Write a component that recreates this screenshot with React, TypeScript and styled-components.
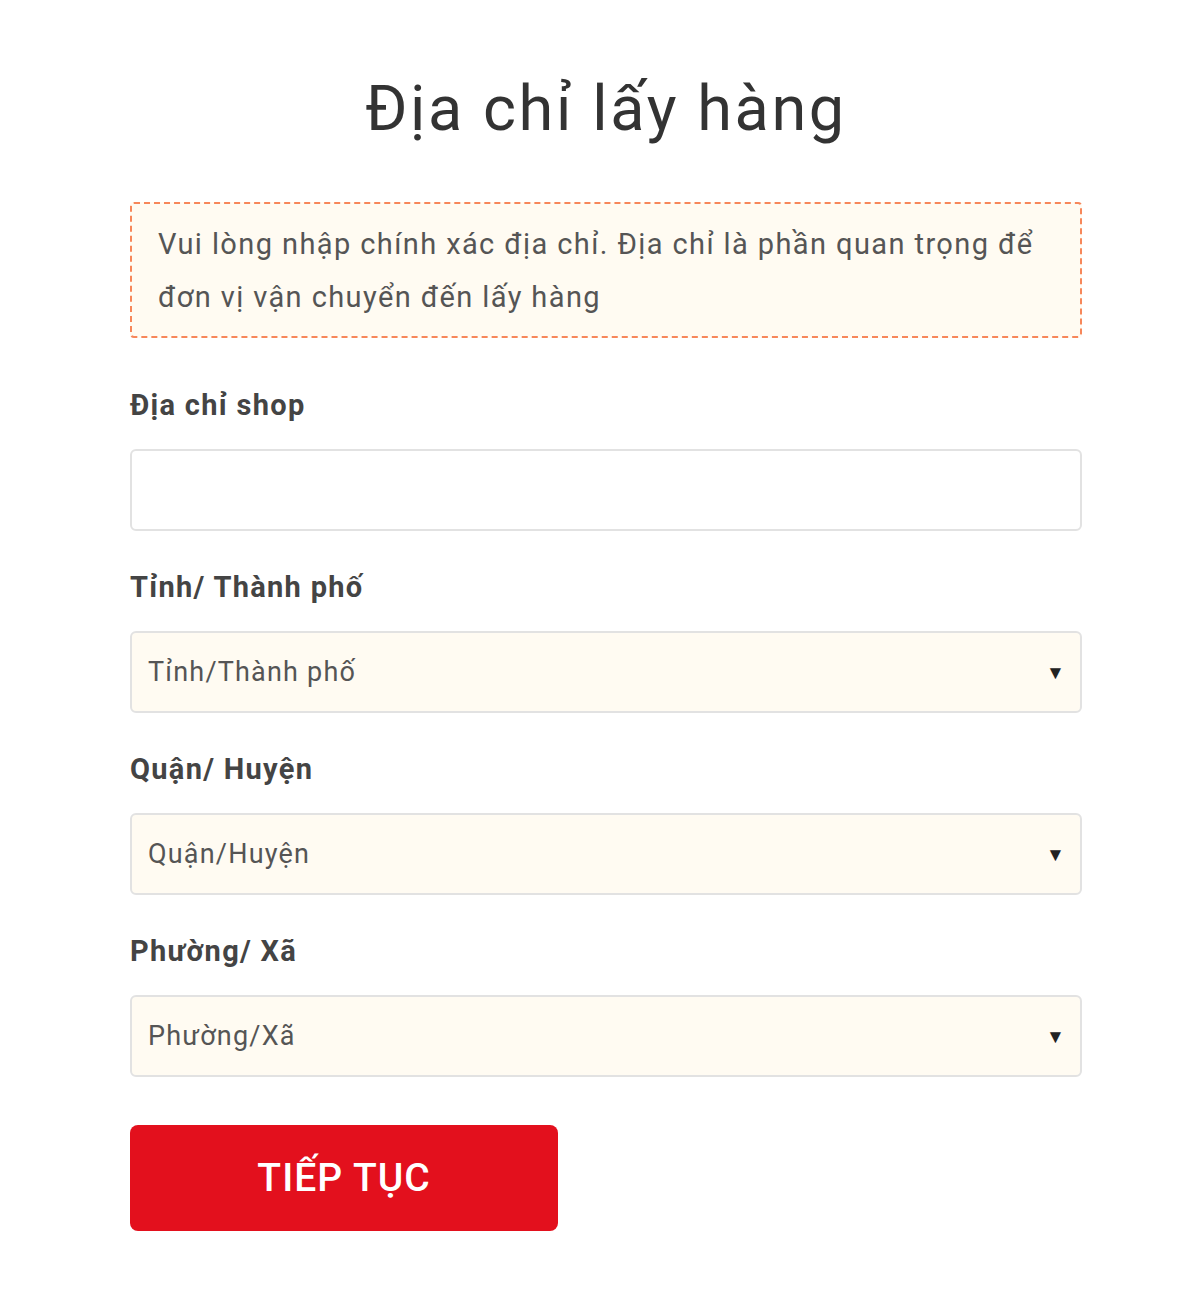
import { FC } from "react"
import styled, { createGlobalStyle } from "styled-components"

const GlobalStyle = createGlobalStyle`
  html, body {
    margin: 0;
    padding: 0;
    background: #ffffff;
    font-family: Roboto, "Liberation Sans", Arial, sans-serif;
  }
`

const Page = styled.div`
  width: 952px;
  margin-left: 130px;
  padding-top: 72px;
  padding-bottom: 70px;
`

const Title = styled.h1`
  margin: 0 0 56px;
  text-align: center;
  font-size: 63px;
  line-height: 74px;
  font-weight: 400;
  letter-spacing: 2.6px;
  color: #333333;
`

const Notice = styled.div`
  box-sizing: border-box;
  height: 136px;
  padding: 14px 26px;
  border: 2px dashed #f7875a;
  border-radius: 4px;
  background: #fffbf2;
  font-size: 29px;
  line-height: 53px;
  letter-spacing: 1.4px;
  color: #555555;
  margin-bottom: 49px;
`

const Field = styled.div`
  display: flex;
  flex-direction: column;
  gap: 26px;
  margin-bottom: 38px;
`

const Label = styled.label`
  font-size: 29px;
  line-height: 36px;
  font-weight: 700;
  letter-spacing: 1.3px;
  color: #444444;
`

const Box = styled.div<{ tinted?: boolean }>`
  box-sizing: border-box;
  height: 82px;
  display: flex;
  align-items: center;
  justify-content: space-between;
  padding: 0 14px 0 16px;
  border: 2px solid #e2e2e2;
  border-radius: 6px;
  background: ${({ tinted }) => (tinted ? "#fffbf2" : "#ffffff")};
  font-size: 27px;
  letter-spacing: 1.2px;
  color: #555555;
`

const Arrow = styled.span`
  font-size: 19px;
  color: #222222;
`

const Button = styled.button`
  width: 428px;
  height: 106px;
  margin-top: 10px;
  border: none;
  border-radius: 8px;
  background: #e3101d;
  color: #ffffff;
  font-family: Roboto, "Liberation Sans", Arial, sans-serif;
  font-size: 39px;
  font-weight: 500;
  letter-spacing: 1px;
  cursor: pointer;
`

const Select: FC<{ label: string; placeholder: string }> = ({ label, placeholder }) => (
  <Field>
    <Label>{label}</Label>
    <Box tinted>
      <span>{placeholder}</span>
      <Arrow>▼</Arrow>
    </Box>
  </Field>
)

export default function App() {
  return (
    <>
      <GlobalStyle />
      <Page>
        <Title>Địa chỉ lấy hàng</Title>
        <Notice>
          Vui lòng nhập chính xác địa chỉ. Địa chỉ là phần quan trọng để đơn vị vận chuyển đến lấy hàng
        </Notice>
        <Field>
          <Label>Địa chỉ shop</Label>
          <Box />
        </Field>
        <Select label="Tỉnh/ Thành phố" placeholder="Tỉnh/Thành phố" />
        <Select label="Quận/ Huyện" placeholder="Quận/Huyện" />
        <Select label="Phường/ Xã" placeholder="Phường/Xã" />
        <Button>TIẾP TỤC</Button>
      </Page>
    </>
  )
}
